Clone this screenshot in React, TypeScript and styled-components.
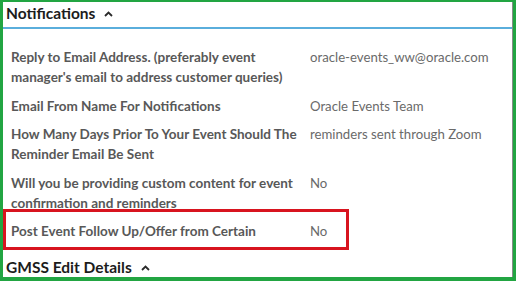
import {type FC} from 'react';
import styled, {createGlobalStyle} from 'styled-components';

const GlobalStyle = createGlobalStyle`
  html, body {
    margin: 0;
    padding: 0;
    background: #fff;
  }
  * {
    box-sizing: border-box;
  }
`;

const Frame = styled.div`
  width: 516px;
  height: 281px;
  border: 3px solid #22a542;
  border-top-width: 2px;
  border-bottom-width: 4px;
  overflow: hidden;
  background: #fff;
  font-family: Lato, 'Noto Sans', sans-serif;
`;

const Panel = styled.div`
  height: 100%;
  border-right: 1px solid #8a8a8a;
  display: flex;
  flex-direction: column;
`;

const SectionHeader = styled.div<{underline?: boolean}>`
  display: flex;
  align-items: flex-start;
  gap: 9px;
  padding: 1px 0 0 3px;
  height: ${props => (props.underline ? '32px' : '22px')};
  border-bottom: ${props => (props.underline ? '2px solid #5aaedc' : 'none')};
  font-size: 15.5px;
  line-height: 20px;
  font-weight: 700;
  color: #1c1c1c;

  svg {
    margin-top: 8px;
  }
`;

const Caret: FC = () => (
  <svg width="9" height="6" viewBox="0 0 9 6">
    <path d="M1 5 L4.5 1.5 L8 5" fill="none" stroke="#2a2a2a" strokeWidth="1.8" />
  </svg>
);

const Rows = styled.div`
  display: flex;
  flex-direction: column;
  gap: 8.5px;
  padding: 18px 0 15px 8px;
`;

const Row = styled.div<{highlighted?: boolean}>`
  position: relative;
  display: grid;
  grid-template-columns: 299px 1fr;
  line-height: 20px;

  &::after {
    content: '';
    display: ${props => (props.highlighted ? 'block' : 'none')};
    position: absolute;
    left: -8px;
    top: -12px;
    width: 340px;
    height: 35px;
    border: 3px solid #d8141f;
    pointer-events: none;
  }
`;

const Label = styled.div`
  font-size: 13.5px;
  font-weight: 700;
  color: #585858;
`;

const Value = styled.div`
  font-size: 13.2px;
  color: #6a6a6a;
`;

type Field = {label: string; value: string; highlighted?: boolean};

const fields: Field[] = [
  {
    label: "Reply to Email Address. (preferably event manager's email to address customer queries)",
    value: 'oracle-events_ww@oracle.com',
  },
  {label: 'Email From Name For Notifications', value: 'Oracle Events Team'},
  {
    label: 'How Many Days Prior To Your Event Should The Reminder Email Be Sent',
    value: 'reminders sent through Zoom',
  },
  {
    label: 'Will you be providing custom content for event confirmation and reminders',
    value: 'No',
  },
  {label: 'Post Event Follow Up/Offer from Certain', value: 'No', highlighted: true},
];

const App: FC = () => (
  <>
    <GlobalStyle />
    <Frame>
      <Panel>
        <SectionHeader underline>
          Notifications
          <Caret />
        </SectionHeader>
        <Rows>
          {fields.map(field => (
            <Row key={field.label} highlighted={field.highlighted}>
              <Label>{field.label}</Label>
              <Value>{field.value}</Value>
            </Row>
          ))}
        </Rows>
        <SectionHeader>
          GMSS Edit Details
          <Caret />
        </SectionHeader>
      </Panel>
    </Frame>
  </>
);

export default App;
